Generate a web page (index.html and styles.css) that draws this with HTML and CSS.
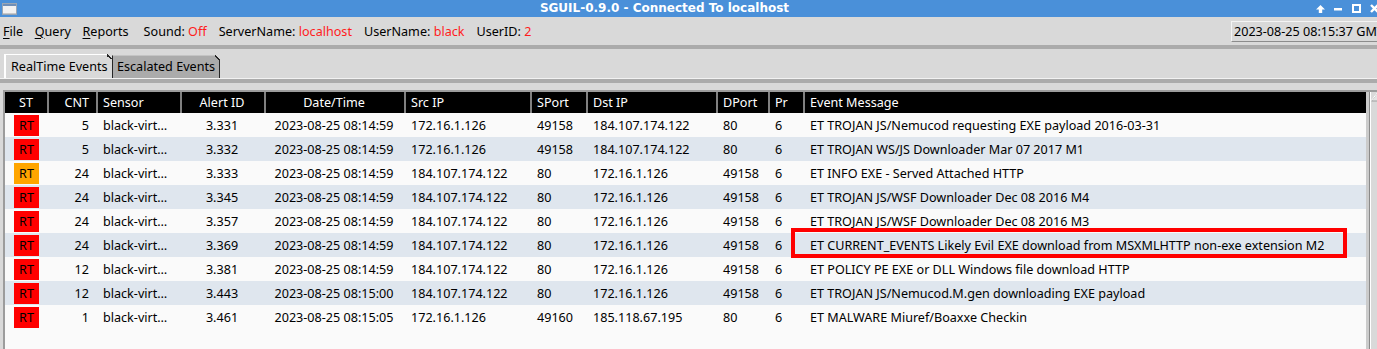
FILE: index.html
```html
<!DOCTYPE html>
<html>
<head>
<meta charset="utf-8">
<title>SGUIL-0.9.0 - Connected To localhost</title>
<link rel="stylesheet" href="styles.css">
</head>
<body>
<div class="app">
  <div class="titlebar">
    <span class="wicon">
      <svg width="15" height="12" viewBox="0 0 15 12"><rect x="0.5" y="0.5" width="14" height="11" fill="#f2f2f2" stroke="#9aa6b4"/><rect x="1" y="1" width="13" height="2" fill="#6f8fb8"/><rect x="1" y="10" width="13" height="1" fill="#c8c8c8"/></svg>
    </span>
    <span class="title">SGUIL-0.9.0 - Connected To localhost</span>
    <span class="wbtns">
      <span><svg width="9" height="8" viewBox="0 0 9 8"><polygon points="4.5,0 9,4.5 6.2,4.5 6.2,8 2.8,8 2.8,4.5 0,4.5" fill="#fff"/></svg></span>
      <span class="wmin"><svg width="8" height="3" viewBox="0 0 8 3"><rect x="0" y="0" width="8" height="2.5" fill="#fff"/></svg></span>
      <span><svg width="9" height="9" viewBox="0 0 9 9"><rect x="1" y="1" width="7" height="7" fill="none" stroke="#fff" stroke-width="2"/></svg></span>
      <span><svg width="9" height="9" viewBox="0 0 9 9"><path d="M1 1 L8 8 M8 1 L1 8" stroke="#fff" stroke-width="2.4"/></svg></span>
    </span>
  </div>

  <div class="menubar">
    <span class="menu"><u>F</u>ile</span>
    <span class="menu"><u>Q</u>uery</span>
    <span class="menu"><u>R</u>eports</span>
    <span class="stat">Sound: <em>Off</em></span>
    <span class="stat">ServerName: <em>localhost</em></span>
    <span class="stat">UserName: <em>black</em></span>
    <span class="stat">UserID: <em>2</em></span>
    <span class="clock">2023-08-25 08:15:37 GMT</span>
  </div>
  <div class="band"></div>

  <div class="tabs">
    <span class="tab active">RealTime Events</span>
    <span class="tab">Escalated Events</span>
  </div>
  <div class="band"></div>

  <div class="pane">
    <div class="tablewrap">
      <div class="grid">
        <div class="row head">
          <span class="c">ST</span>
          <span class="r">CNT</span>
          <span>Sensor</span>
          <span class="c">Alert ID</span>
          <span class="c">Date/Time</span>
          <span>Src IP</span>
          <span>SPort</span>
          <span>Dst IP</span>
          <span>DPort</span>
          <span>Pr</span>
          <span>Event Message</span>
        </div>

        <div class="row">
          <span class="st"><b class="rt">RT</b></span><span class="r">5</span><span>black-virt…</span><span class="c">3.331</span><span class="c">2023-08-25 08:14:59</span><span>172.16.1.126</span><span>49158</span><span>184.107.174.122</span><span>80</span><span>6</span><span>ET TROJAN JS/Nemucod requesting EXE payload 2016-03-31</span>
        </div>
        <div class="row alt">
          <span class="st"><b class="rt">RT</b></span><span class="r">5</span><span>black-virt…</span><span class="c">3.332</span><span class="c">2023-08-25 08:14:59</span><span>172.16.1.126</span><span>49158</span><span>184.107.174.122</span><span>80</span><span>6</span><span>ET TROJAN WS/JS Downloader Mar 07 2017 M1</span>
        </div>
        <div class="row">
          <span class="st"><b class="rt warn">RT</b></span><span class="r">24</span><span>black-virt…</span><span class="c">3.333</span><span class="c">2023-08-25 08:14:59</span><span>184.107.174.122</span><span>80</span><span>172.16.1.126</span><span>49158</span><span>6</span><span>ET INFO EXE - Served Attached HTTP</span>
        </div>
        <div class="row alt">
          <span class="st"><b class="rt">RT</b></span><span class="r">24</span><span>black-virt…</span><span class="c">3.345</span><span class="c">2023-08-25 08:14:59</span><span>184.107.174.122</span><span>80</span><span>172.16.1.126</span><span>49158</span><span>6</span><span>ET TROJAN JS/WSF Downloader Dec 08 2016 M4</span>
        </div>
        <div class="row">
          <span class="st"><b class="rt">RT</b></span><span class="r">24</span><span>black-virt…</span><span class="c">3.357</span><span class="c">2023-08-25 08:14:59</span><span>184.107.174.122</span><span>80</span><span>172.16.1.126</span><span>49158</span><span>6</span><span>ET TROJAN JS/WSF Downloader Dec 08 2016 M3</span>
        </div>
        <div class="row alt">
          <span class="st"><b class="rt">RT</b></span><span class="r">24</span><span>black-virt…</span><span class="c">3.369</span><span class="c">2023-08-25 08:14:59</span><span>184.107.174.122</span><span>80</span><span>172.16.1.126</span><span>49158</span><span>6</span><span>ET CURRENT_EVENTS Likely Evil EXE download from MSXMLHTTP non-exe extension M2</span>
        </div>
        <div class="row">
          <span class="st"><b class="rt">RT</b></span><span class="r">12</span><span>black-virt…</span><span class="c">3.381</span><span class="c">2023-08-25 08:14:59</span><span>184.107.174.122</span><span>80</span><span>172.16.1.126</span><span>49158</span><span>6</span><span>ET POLICY PE EXE or DLL Windows file download HTTP</span>
        </div>
        <div class="row alt">
          <span class="st"><b class="rt">RT</b></span><span class="r">12</span><span>black-virt…</span><span class="c">3.443</span><span class="c">2023-08-25 08:15:00</span><span>184.107.174.122</span><span>80</span><span>172.16.1.126</span><span>49158</span><span>6</span><span>ET TROJAN JS/Nemucod.M.gen downloading EXE payload</span>
        </div>
        <div class="row">
          <span class="st"><b class="rt">RT</b></span><span class="r">1</span><span>black-virt…</span><span class="c">3.461</span><span class="c">2023-08-25 08:15:05</span><span>172.16.1.126</span><span>49160</span><span>185.118.67.195</span><span>80</span><span>6</span><span>ET MALWARE Miuref/Boaxxe Checkin</span>
        </div>
      </div>
      <div class="vgap"></div>
      <div class="vscroll">
        <svg width="15" height="11" viewBox="0 0 15 11"><polygon points="1.5,10 8,0.8 14.5,10" fill="#e4e4e4" stroke="#a0a0a0" stroke-width="1"/><line x1="1.5" y1="9.5" x2="8" y2="0.8" stroke="#ffffff" stroke-width="1"/></svg>
      </div>
      <div class="highlight"></div>
    </div>
  </div>
</div>
</body>
</html>
```

FILE: styles.css
```css
html, body {
  margin: 0;
  padding: 0;
  height: 349px;
  overflow: hidden;
  background: #d9d9d9;
}

.app {
  width: 1389px;
  font-family: "Noto Sans", "Open Sans", sans-serif;
  font-size: 12.6px;
  color: #000;
  background: #d9d9d9;
}

/* ---------- title bar ---------- */
.titlebar {
  height: 17px;
  background: #4a90d9;
  display: flex;
  align-items: center;
  color: #fff;
}
.wicon {
  display: flex;
  width: 16px;
  padding-left: 2px;
  padding-top: 1px;
}
.title {
  flex: 1;
  text-align: center;
  font: bold 12px "DejaVu Sans", sans-serif;
  line-height: 17px;
}
.wbtns {
  display: flex;
  margin-right: 6px;
}
.wbtns > span {
  width: 18px;
  height: 17px;
  display: flex;
  justify-content: center;
  align-items: center;
}
.wbtns > span.wmin {
  align-items: flex-end;
  padding-bottom: 6px;
  box-sizing: border-box;
}

/* ---------- menu bar ---------- */
.menubar {
  height: 28px;
  display: flex;
  align-items: center;
  padding-left: 3px;
  font-size: 12.6px;
  white-space: nowrap;
}
.menu {
  margin-right: 11.5px;
}
.menu u {
  text-decoration-thickness: 1px;
  text-underline-offset: 2px;
}
.stat {
  margin-right: 12px;
}
.menu + .stat {
  margin-left: 3.5px;
}
.stat em {
  font-style: normal;
  color: #ff1c1c;
}
.clock {
  margin-left: auto;
  margin-right: 2px;
  width: 156px;
  height: 21px;
  box-sizing: border-box;
  border-top: 1px solid #f4f4f4;
  border-left: 1px solid #f4f4f4;
  border-bottom: 1px solid #8c8c8c;
  border-right: 1px solid #8c8c8c;
  padding-left: 2px;
  line-height: 19px;
}

.band {
  height: 4px;
  background: #ababab;
}

/* ---------- tabs ---------- */
.tabs {
  height: 29px;
  display: flex;
  align-items: flex-end;
  padding-left: 4px;
  border-bottom: 1px solid #f2f2f2;
}
.tab {
  position: relative;
  box-sizing: border-box;
  width: 108px;
  height: 23px;
  line-height: 22px;
  padding-left: 4px;
  white-space: nowrap;
  background: #ababab;
  border-top: 1px solid #c4c4c4;
  border-left: 1px solid #262626;
  border-right: 1px solid #262626;
}
.tab.active {
  height: 24px;
  line-height: 23px;
  padding-left: 5px;
  background: #d9d9d9;
  border-top: 1px solid #ffffff;
  border-left: 2px solid #ffffff;
  border-right: none;
}
.tab::after {
  content: "";
  position: absolute;
  top: -1px;
  right: -1px;
  width: 5px;
  height: 5px;
  background: linear-gradient(to bottom left, #d9d9d9 45%, #262626 45%, #262626 70%, transparent 70%);
}
.tab.active::after {
  right: 0;
}

/* ---------- event table ---------- */
.pane {
  padding: 7px 0 0 3px;
}
.tablewrap {
  position: relative;
  display: flex;
  height: 257px;
  border-top: 2px solid #9c9c9c;
  border-left: 2px solid #9c9c9c;
}
.grid {
  width: 1361px;
  flex: none;
  background: #fafafa;
}
.row {
  display: grid;
  grid-template-columns: 42px 49px 84px 84px 140px 126px 56px 130px 52px 35px 1fr;
  height: 24px;
  align-items: center;
  white-space: nowrap;
}
.row > span {
  padding: 0 7px;
  overflow: hidden;
}
.row.alt {
  background: #dfe6ee;
}
.head {
  height: 21px;
  background: #000;
  color: #fff;
}
.head > span {
  height: 21px;
  line-height: 21px;
  box-sizing: border-box;
}
.head > span + span {
  border-left: 2px solid #808080;
  padding-left: 5px;
}
.row > .c { text-align: center; }
.row > .r { text-align: right; }
.row > .st {
  padding: 0;
  display: flex;
  justify-content: center;
}
.rt {
  display: block;
  width: 25px;
  height: 21px;
  line-height: 21px;
  text-align: center;
  font-weight: normal;
  background: #ff0000;
  margin-left: 1px;
}
.rt.warn {
  background: #ffa500;
}

.vgap {
  width: 3px;
  flex: none;
  background: #cbcbcb;
}
.vscroll {
  width: 15px;
  flex: none;
  border-left: 1px solid #8a8a8a;
  box-shadow: inset 1px 0 #ffffff;
  background: #d9d9d9;
}
.vscroll svg {
  display: block;
  margin-top: -1px;
}

.highlight {
  position: absolute;
  left: 786px;
  top: 136px;
  width: 556px;
  height: 30px;
  box-sizing: border-box;
  border: 4px solid #ff0000;
}
```
